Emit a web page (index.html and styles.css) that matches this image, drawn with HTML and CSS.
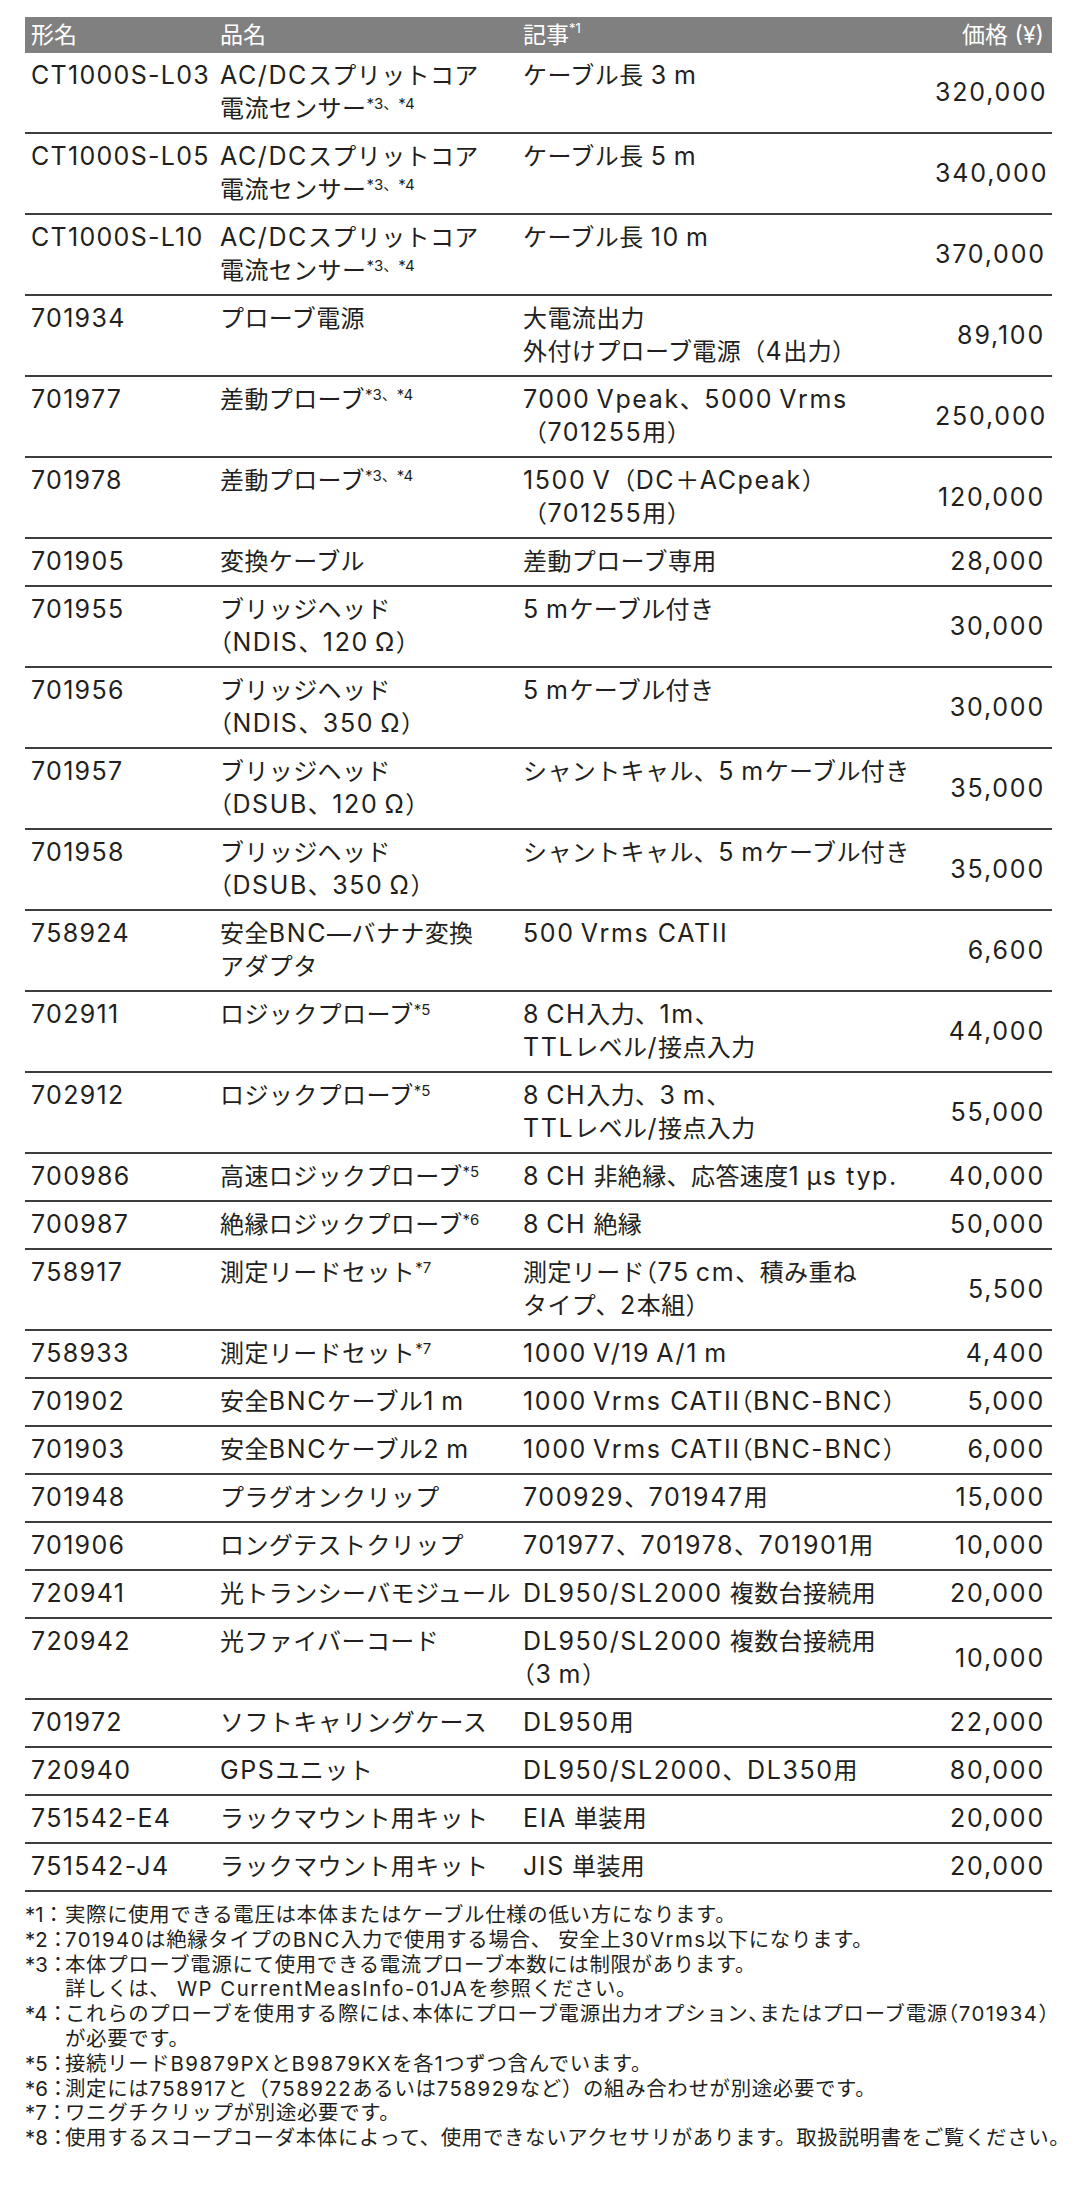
FILE: index.html
```html
<!DOCTYPE html>
<html lang="ja">
<head>
<meta charset="utf-8">
<title>アクセサリ価格表</title>
<link rel="stylesheet" href="styles.css">
</head>
<body>
<div class="page">
<table class="price-table">
<colgroup><col class="c-model"><col class="c-name"><col class="c-desc"><col class="c-price"></colgroup>
<thead>
<tr><th>形名</th><th>品名</th><th>記事<sup>*1</sup></th><th class="num">価格 (¥)</th></tr>
</thead>
<tbody>
<tr><td>CT1000S-L03</td><td><span class="en">AC/DC</span>スプリットコア<br>電流センサー<sup>*3、*4</sup></td><td>ケーブル長 <span class="en">3&thinsp;m</span></td><td class="num">320,000</td></tr>
<tr><td>CT1000S-L05</td><td><span class="en">AC/DC</span>スプリットコア<br>電流センサー<sup>*3、*4</sup></td><td>ケーブル長 <span class="en">5&thinsp;m</span></td><td class="num">340,000</td></tr>
<tr><td>CT1000S-L10</td><td><span class="en">AC/DC</span>スプリットコア<br>電流センサー<sup>*3、*4</sup></td><td>ケーブル長 <span class="en">10&thinsp;m</span></td><td class="num">370,000</td></tr>
<tr><td>701934</td><td>プローブ電源</td><td>大電流出力<br>外付けプローブ電源（<span class="en">4</span>出力）</td><td class="num">89,100</td></tr>
<tr><td>701977</td><td>差動プローブ<sup>*3、*4</sup></td><td><span class="en">7000&thinsp;Vpeak</span>、<span class="en">5000&thinsp;Vrms</span><br>（<span class="en">701255</span>用）</td><td class="num">250,000</td></tr>
<tr><td>701978</td><td>差動プローブ<sup>*3、*4</sup></td><td><span class="en">1500&thinsp;V</span>（<span class="en">DC</span>＋<span class="en">ACpeak</span>）<br>（<span class="en">701255</span>用）</td><td class="num">120,000</td></tr>
<tr><td>701905</td><td>変換ケーブル</td><td>差動プローブ専用</td><td class="num">28,000</td></tr>
<tr><td>701955</td><td>ブリッジヘッド<br><span class="pn">（</span><span class="en">NDIS</span>、<span class="en">120&thinsp;Ω</span><span class="pn">）</span></td><td><span class="en">5&thinsp;m</span>ケーブル付き</td><td class="num">30,000</td></tr>
<tr><td>701956</td><td>ブリッジヘッド<br><span class="pn">（</span><span class="en">NDIS</span>、<span class="en">350&thinsp;Ω</span><span class="pn">）</span></td><td><span class="en">5&thinsp;m</span>ケーブル付き</td><td class="num">30,000</td></tr>
<tr><td>701957</td><td>ブリッジヘッド<br><span class="pn">（</span><span class="en">DSUB</span>、<span class="en">120&thinsp;Ω</span><span class="pn">）</span></td><td>シャントキャル、<span class="en">5&thinsp;m</span>ケーブル付き</td><td class="num">35,000</td></tr>
<tr><td>701958</td><td>ブリッジヘッド<br><span class="pn">（</span><span class="en">DSUB</span>、<span class="en">350&thinsp;Ω</span><span class="pn">）</span></td><td>シャントキャル、<span class="en">5&thinsp;m</span>ケーブル付き</td><td class="num">35,000</td></tr>
<tr><td>758924</td><td>安全<span class="en">BNC</span>―バナナ変換<br>アダプタ</td><td><span class="en">500&thinsp;Vrms CATII</span></td><td class="num">6,600</td></tr>
<tr><td>702911</td><td>ロジックプローブ<sup>*5</sup></td><td><span class="en">8&thinsp;CH</span>入力、<span class="en">1m</span>、<br><span class="en">TTL</span>レベル<span class="en">/</span>接点入力</td><td class="num">44,000</td></tr>
<tr><td>702912</td><td>ロジックプローブ<sup>*5</sup></td><td><span class="en">8&thinsp;CH</span>入力、<span class="en">3&thinsp;m</span>、<br><span class="en">TTL</span>レベル<span class="en">/</span>接点入力</td><td class="num">55,000</td></tr>
<tr><td>700986</td><td>高速ロジックプローブ<sup>*5</sup></td><td><span class="en">8&thinsp;CH</span> 非絶縁、応答速度<span class="en">1&thinsp;μs typ.</span></td><td class="num">40,000</td></tr>
<tr><td>700987</td><td>絶縁ロジックプローブ<sup>*6</sup></td><td><span class="en">8&thinsp;CH</span> 絶縁</td><td class="num">50,000</td></tr>
<tr><td>758917</td><td>測定リードセット<sup>*7</sup></td><td>測定リード<span class="pn">（</span><span class="en">75&thinsp;cm</span>、積み重ね<br>タイプ、<span class="en">2</span>本組<span class="pn">）</span></td><td class="num">5,500</td></tr>
<tr><td>758933</td><td>測定リードセット<sup>*7</sup></td><td><span class="en">1000&thinsp;V/19&thinsp;A/1&thinsp;m</span></td><td class="num">4,400</td></tr>
<tr><td>701902</td><td>安全<span class="en">BNC</span>ケーブル<span class="en">1&thinsp;m</span></td><td><span class="en">1000&thinsp;Vrms CATII</span><span class="pn">（</span><span class="en">BNC-BNC</span><span class="pn">）</span></td><td class="num">5,000</td></tr>
<tr><td>701903</td><td>安全<span class="en">BNC</span>ケーブル<span class="en">2&thinsp;m</span></td><td><span class="en">1000&thinsp;Vrms CATII</span><span class="pn">（</span><span class="en">BNC-BNC</span><span class="pn">）</span></td><td class="num">6,000</td></tr>
<tr><td>701948</td><td>プラグオンクリップ</td><td><span class="en">700929</span>、<span class="en">701947</span>用</td><td class="num">15,000</td></tr>
<tr><td>701906</td><td>ロングテストクリップ</td><td><span class="en">701977</span>、<span class="en">701978</span>、<span class="en">701901</span>用</td><td class="num">10,000</td></tr>
<tr><td>720941</td><td>光トランシーバモジュール</td><td><span class="en">DL950/SL2000</span> 複数台接続用</td><td class="num">20,000</td></tr>
<tr><td>720942</td><td>光ファイバーコード</td><td><span class="en">DL950/SL2000</span> 複数台接続用<br><span class="pn">（</span><span class="en">3&thinsp;m</span><span class="pn">）</span></td><td class="num">10,000</td></tr>
<tr><td>701972</td><td>ソフトキャリングケース</td><td><span class="en">DL950</span>用</td><td class="num">22,000</td></tr>
<tr><td>720940</td><td><span class="en">GPS</span>ユニット</td><td><span class="en">DL950/SL2000</span>、<span class="en">DL350</span>用</td><td class="num">80,000</td></tr>
<tr><td>751542-E4</td><td>ラックマウント用キット</td><td><span class="en">EIA</span> 単装用</td><td class="num">20,000</td></tr>
<tr><td>751542-J4</td><td>ラックマウント用キット</td><td><span class="en">JIS</span> 単装用</td><td class="num">20,000</td></tr>
</tbody>
</table>

<div class="notes">
<div class="note"><span class="mark">*1：</span><div class="text"><p>実際に使用できる電圧は本体またはケーブル仕様の低い方になります。</p></div></div>
<div class="note"><span class="mark">*2：</span><div class="text"><p><span class="en">701940</span>は絶縁タイプの<span class="en">BNC</span>入力で使用する場合、 安全上<span class="en">30Vrms</span>以下になります。</p></div></div>
<div class="note"><span class="mark">*3：</span><div class="text"><p>本体プローブ電源にて使用できる電流プローブ本数には制限があります。</p><p>詳しくは、 <span class="en">WP CurrentMeasInfo-01JA</span>を参照ください。</p></div></div>
<div class="note"><span class="mark">*4：</span><div class="text"><p>これらのプローブを使用する際には<span class="pn">、</span>本体にプローブ電源出力オプション<span class="pn">、</span>またはプローブ電源<span class="pn">（</span><span class="en">701934</span><span class="pn">）</span></p><p>が必要です。</p></div></div>
<div class="note"><span class="mark">*5：</span><div class="text"><p>接続リード<span class="en">B9879PX</span>と<span class="en">B9879KX</span>を各<span class="en">1</span>つずつ含んでいます。</p></div></div>
<div class="note"><span class="mark">*6：</span><div class="text"><p>測定には<span class="en">758917</span>と（<span class="en">758922</span>あるいは<span class="en">758929</span>など）の組み合わせが別途必要です。</p></div></div>
<div class="note"><span class="mark">*7：</span><div class="text"><p>ワニグチクリップが別途必要です。</p></div></div>
<div class="note"><span class="mark">*8：</span><div class="text"><p>使用するスコープコーダ本体によって、使用できないアクセサリがあります。取扱説明書をご覧ください。</p></div></div>
</div>
</div>
</body>
</html>
```

FILE: styles.css
```css
html, body {
  margin: 0;
  padding: 0;
  background: #ffffff;
}

.page {
  padding: 17px 25px 0 25px;
  font-family: "Inter", "Noto Sans CJK JP", sans-serif;
  color: #231f20;
}

.price-table {
  width: 1027px;
  border-collapse: collapse;
  table-layout: fixed;
}

.c-model { width: 188px; }
.c-name { width: 303px; }
.c-desc { width: 412px; }
.c-price { width: 124px; }

.price-table th {
  background: #808080;
  color: #ffffff;
  font-weight: normal;
  font-size: 23px;
  height: 36px;
  line-height: 36px;
  padding: 0 7px;
  text-align: left;
  white-space: nowrap;
}

.price-table th:first-child {
  padding-left: 6px;
}

.price-table th sup {
  font-size: 13px;
  vertical-align: top;
  line-height: 22px;
}

.price-table td {
  font-size: 24px;
  line-height: 33px;
  padding: 6px 7px 7px;
  vertical-align: top;
  white-space: nowrap;
  border-bottom: 2px solid #3d3d3d;
  letter-spacing: 0.4px;
}

.price-table td:first-child {
  padding-left: 6px;
  font-size: 25px;
  letter-spacing: 1.3px;
}

.price-table td sup {
  font-size: 15px;
  vertical-align: top;
  line-height: 24px;
  letter-spacing: 0;
}

.price-table .num {
  text-align: right;
  vertical-align: middle;
  font-size: 25px;
  letter-spacing: 1.8px;
}

.price-table th.num {
  font-size: 23px;
  letter-spacing: 0;
  padding-right: 8px;
}

.en {
  font-size: 25px;
  letter-spacing: 1.6px;
}

.pn {
  font-feature-settings: "halt";
}

.notes {
  padding-top: 11px;
  font-size: 20.4px;
  line-height: 24.8px;
  letter-spacing: 0.7px;
}

.notes .en {
  font-size: 20.4px;
  letter-spacing: 1.5px;
}

.note {
  display: flex;
  white-space: nowrap;
}

.note .mark {
  flex: 0 0 40px;
  width: 40px;
  letter-spacing: 0;
}

.note .text p {
  margin: 0;
}
```
